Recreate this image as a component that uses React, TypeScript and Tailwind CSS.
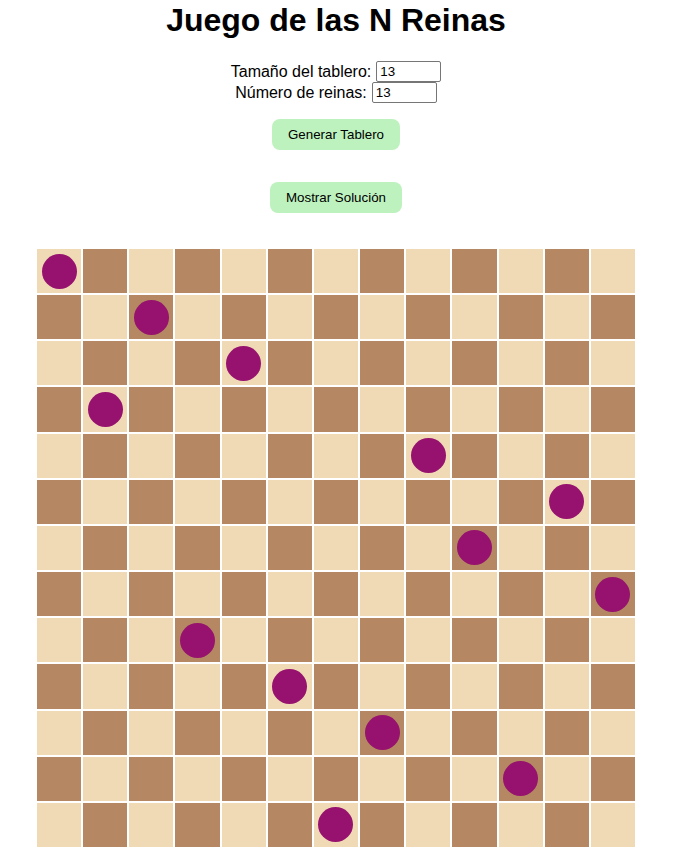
import React from 'react';

const N = 13;
// queen column for each row
const solution = [0, 2, 4, 1, 8, 11, 9, 12, 3, 5, 7, 10, 6];

export default function App() {
  return (
    <div className="w-[672px] bg-white text-black font-['Liberation_Sans',Arial,sans-serif]">
      <h1 className="pt-[2px] text-[32px] leading-[37px] font-bold text-center">Juego de las N Reinas</h1>

      <div className="mt-[22px] flex flex-col items-center">
        <div className="flex items-center gap-[5px] h-[21px] text-[16px]">
          <label>Tamaño del tablero:</label>
          <input
            type="number"
            defaultValue="13"
            className="w-[65px] h-[21px] px-[3px] text-[13.33px] border border-[#767676] rounded-[2px] outline-none [appearance:textfield]"
          />
        </div>
        <div className="flex items-center gap-[5px] h-[21px] text-[16px]">
          <label>Número de reinas:</label>
          <input
            type="number"
            defaultValue="13"
            className="w-[65px] h-[21px] px-[3px] text-[13.33px] border border-[#767676] rounded-[2px] outline-none [appearance:textfield]"
          />
        </div>
      </div>

      <div className="mt-[16px] flex flex-col items-center">
        <button className="h-[31px] px-[16px] rounded-[8px] bg-[#bdf2be] text-[13.33px] text-black">
          Generar Tablero
        </button>
        <button className="mt-[32px] h-[31px] px-[16px] rounded-[8px] bg-[#bdf2be] text-[13.33px] text-black">
          Mostrar Solución
        </button>
      </div>

      <div className="mt-[35px] flex justify-center">
        <div className="grid grid-cols-13 grid-rows-13 w-[600px] h-[600px]">
          {Array.from({ length: N * N }).map((_, i) => {
            const r = Math.floor(i / N);
            const c = i % N;
            const light = (r + c) % 2 === 0;
            return (
              <div
                key={i}
                className={
                  'flex items-center justify-center border border-white ' +
                  (light ? 'bg-[#f0d9b5]' : 'bg-[#b58863]')
                }
              >
                {solution[r] === c && <div className="w-[35px] h-[35px] rounded-full bg-[#96126e]" />}
              </div>
            );
          })}
        </div>
      </div>
    </div>
  );
}
